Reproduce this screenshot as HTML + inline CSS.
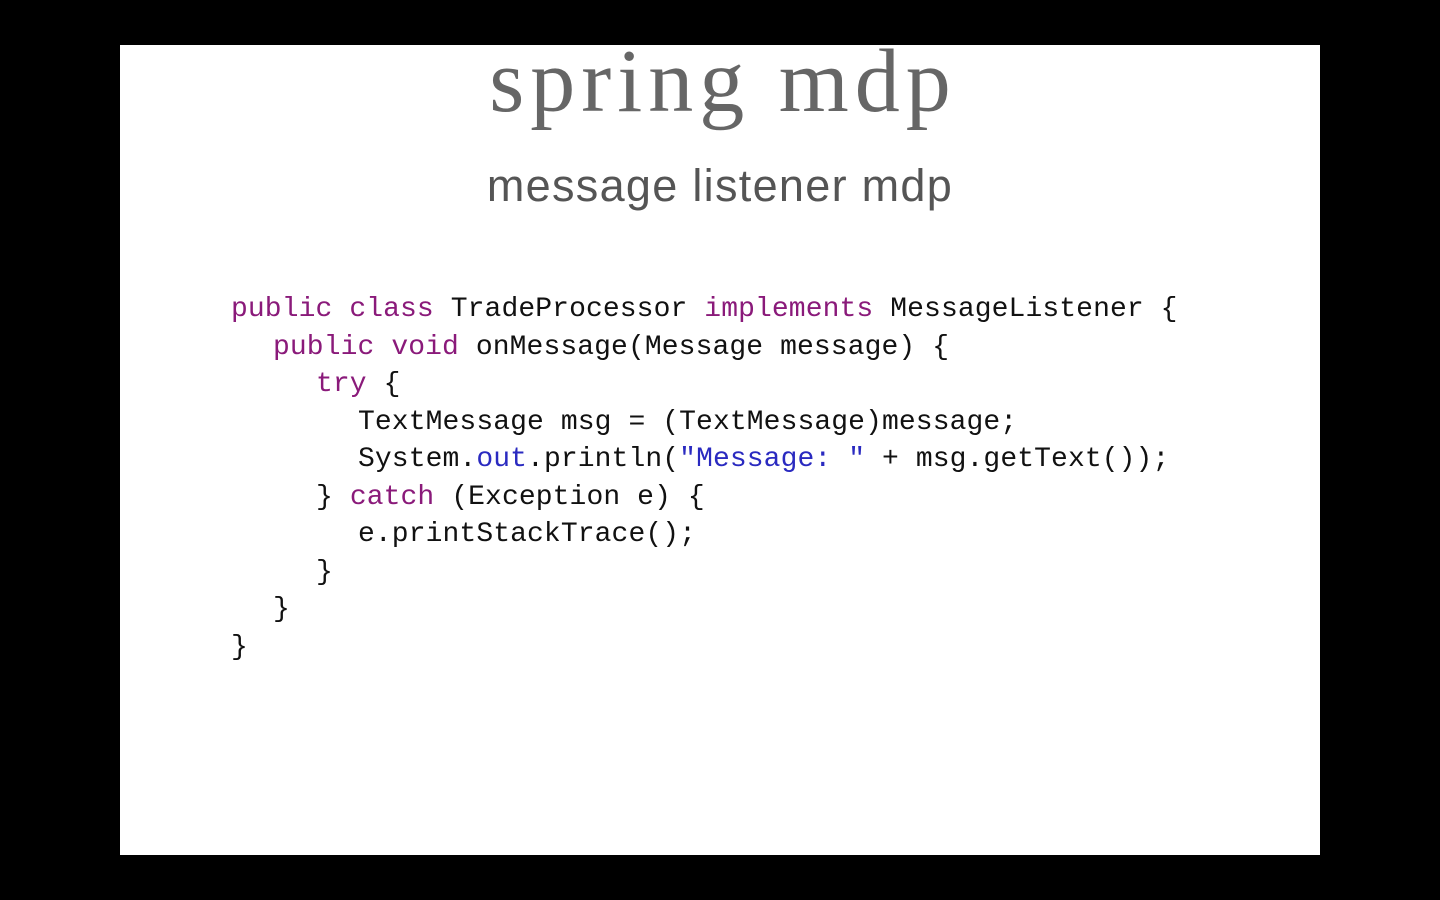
<!DOCTYPE html>
<html><head><meta charset="utf-8"><style>
html,body{margin:0;padding:0;background:#000;width:1440px;height:900px;overflow:hidden}
.slide{position:absolute;left:120px;top:45px;width:1200px;height:810px;background:#fff}
.t{position:absolute;left:0;width:1440px;text-align:center}
#title{top:32px;font:90px/100px "Liberation Serif",serif;color:#666;letter-spacing:6px;text-indent:6px}
#sub{top:158px;font:45px/56px "Liberation Sans",sans-serif;color:#555;letter-spacing:1.3px}
pre{position:absolute;left:231px;top:291px;margin:0;font:28px/37.5px "Liberation Mono",monospace;color:#111;letter-spacing:0.1px}
.k{color:#8a1a7a}.b{color:#2a2ac0}
.i1{padding-left:42px}.i2{padding-left:85px}.i3{padding-left:127px}
pre div{height:37.5px;white-space:pre}
</style></head><body>
<div class="slide"></div>
<div class="t" id="title">spring mdp</div>
<div class="t" id="sub">message listener mdp</div>
<pre><div><span class="k">public class</span> TradeProcessor <span class="k">implements</span> MessageListener {</div><div class="i1"><span class="k">public void</span> onMessage(Message message) {</div><div class="i2"><span class="k">try</span> {</div><div class="i3">TextMessage msg = (TextMessage)message;</div><div class="i3">System.<span class="b">out</span>.println(<span class="b">"Message: "</span> + msg.getText());</div><div class="i2">} <span class="k">catch</span> (Exception e) {</div><div class="i3">e.printStackTrace();</div><div class="i2">}</div><div class="i1">}</div><div>}</div></pre>
</body></html>
